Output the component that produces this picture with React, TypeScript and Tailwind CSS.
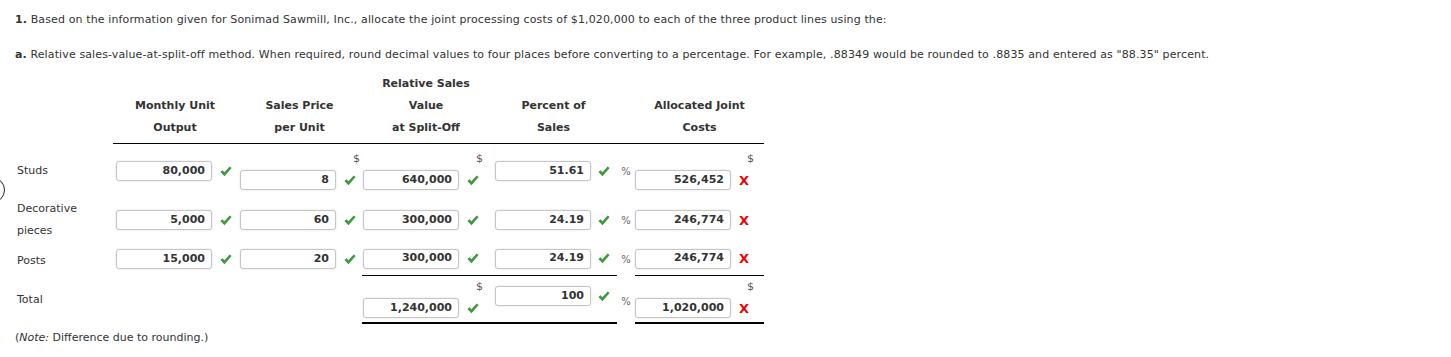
import type { ReactNode } from "react";

type Mark = "ok" | "bad";

type Cell = {
  value: string;
  mark: Mark;
  dollar?: boolean;
  extra?: string;
};

type Row = {
  label: ReactNode;
  cells: [Cell | null, Cell | null, Cell | null, Cell | null, Cell | null];
  rowClass: string;
  underline?: "thin" | "thick";
};

// Pixel offsets of each input inside its column, so the boxes line up across rows.
const CELL_PAD = ["pl-[3px]", "pl-[3px]", "pl-[1px]", "pl-[5px]", "pl-0"];
const MARK_GAP = ["gap-[8px]", "gap-[8px]", "gap-[8px]", "gap-[7px]", "gap-[8px]"];

const ROWS: Row[] = [
  {
    label: "Studs",
    rowClass: "h-[54px]",
    cells: [
      { value: "80,000", mark: "ok" },
      { value: "8", mark: "ok", dollar: true },
      { value: "640,000", mark: "ok", dollar: true },
      { value: "51.61", mark: "ok" },
      { value: "526,452", mark: "bad", dollar: true },
    ],
  },
  {
    label: (
      <>
        Decorative
        <br />
        pieces
      </>
    ),
    rowClass: "h-[44px]",
    cells: [
      { value: "5,000", mark: "ok" },
      { value: "60", mark: "ok" },
      { value: "300,000", mark: "ok" },
      { value: "24.19", mark: "ok" },
      { value: "246,774", mark: "bad" },
    ],
  },
  {
    label: "Posts",
    rowClass: "h-[34px]",
    underline: "thin",
    cells: [
      { value: "15,000", mark: "ok" },
      { value: "20", mark: "ok" },
      { value: "300,000", mark: "ok" },
      { value: "24.19", mark: "ok" },
      { value: "246,774", mark: "bad" },
    ],
  },
  {
    label: "Total",
    rowClass: "h-[48px]",
    underline: "thick",
    cells: [
      null,
      null,
      { value: "1,240,000", mark: "ok", dollar: true },
      { value: "100", mark: "ok", extra: "pb-[6px]" },
      { value: "1,020,000", mark: "bad", dollar: true },
    ],
  },
];

function Check() {
  return (
    <svg width="12" height="11" viewBox="0 0 12 11" className="shrink-0" aria-hidden>
      <path d="M0.4 6.1 L2.5 4.3 L4.4 6.3 L9.7 0.4 L11.6 2.1 L4.5 10.2 Z" fill="#3d9a3d" />
    </svg>
  );
}

function Cross() {
  return (
    <span className="w-[11px] shrink-0 text-[13px] font-bold leading-none text-[#f00000]">X</span>
  );
}

function Answer({ value }: { value: string }) {
  return (
    <span className="flex h-[20px] w-[96px] shrink-0 items-center justify-end rounded-[3px] border border-[#c6c6c6] bg-white pr-[6px] font-bold text-[#333] shadow-[0_0_2px_rgba(0,0,0,0.15)]">
      {value}
    </span>
  );
}

function AnswerCell({ cell, col }: { cell: Cell; col: number }) {
  const box = (
    <div className={`flex items-center ${MARK_GAP[col]}`}>
      <Answer value={cell.value} />
      {cell.mark === "ok" ? <Check /> : <Cross />}
    </div>
  );
  if (!cell.dollar) return box;
  return (
    <div className="flex w-fit flex-col">
      <div className="h-[14px] text-right leading-[14px] text-[#555]">$</div>
      <div className="mt-[4px] pr-[4px]">{box}</div>
    </div>
  );
}

function Header({ lines }: { lines: string[] }) {
  return (
    <div className="flex flex-col justify-end border-b border-black pb-[4px] text-center font-bold leading-[22px] text-[#333]">
      {lines.map((l) => (
        <div key={l}>{l}</div>
      ))}
    </div>
  );
}

export default function App() {
  return (
    <div className="relative min-h-[357px] w-[1451px] overflow-hidden bg-white pl-[15px] pt-[9px] font-['DejaVu_Sans',Verdana,sans-serif] text-[11px] text-[#333]">
      <span className="absolute left-[-21px] top-[177px] h-[26px] w-[26px] rounded-full border-[1.5px] border-[#222]" />

      <div className="tracking-[0.12px]">
        <p className="leading-[22px]">
          <b>1.</b> Based on the information given for Sonimad Sawmill, Inc., allocate the joint
          processing costs of $1,020,000 to each of the three product lines using the:
        </p>
        <p className="mt-[13px] leading-[22px]">
          <b>a.</b> Relative sales-value-at-split-off method. When required, round decimal values to
          four places before converting to a percentage. For example, .88349 would be rounded to
          .8835 and entered as "88.35" percent.
        </p>
      </div>

      <div className="mt-[7px] grid grid-cols-[98px_124px_125px_128px_127px_18px_129px]">
        <div />
        <Header lines={["Monthly Unit", "Output"]} />
        <Header lines={["Sales Price", "per Unit"]} />
        <Header lines={["Relative Sales", "Value", "at Split-Off"]} />
        <Header lines={["Percent of", "Sales"]} />
        <Header lines={[]} />
        <Header lines={["Allocated Joint", "Costs"]} />

        {ROWS.map((row, r) => {
          const line =
            row.underline === "thick"
              ? "border-b-2 border-black"
              : row.underline === "thin"
                ? "border-b border-black"
                : "";
          return [
            <div key={`l${r}`} className={`flex items-center pl-[2px] leading-[22px] ${row.rowClass}`}>
              <div className={r === 2 ? "pt-[3px]" : ""}>{row.label}</div>
            </div>,
            ...row.cells.flatMap((cell, c) => {
              const ruled = c >= 2 ? line : "";
              const out = [
                <div
                  key={`c${r}-${c}`}
                  className={`flex items-center ${CELL_PAD[c]} ${ruled} ${cell?.extra ?? ""}`}
                >
                  {cell && <AnswerCell cell={cell} col={c} />}
                </div>,
              ];
              if (c === 3) {
                out.push(
                  <div
                    key={`p${r}`}
                    className={`flex items-center justify-center ${row.underline === "thick" ? "pt-[2px]" : ""}`}
                  >
                    <span className="text-[10px] text-[#666]">%</span>
                  </div>,
                );
              }
              return out;
            }),
          ];
        })}
      </div>

      <p className="mt-[3px] leading-[22px]">
        (<i>Note:</i> Difference due to rounding.)
      </p>
    </div>
  );
}
